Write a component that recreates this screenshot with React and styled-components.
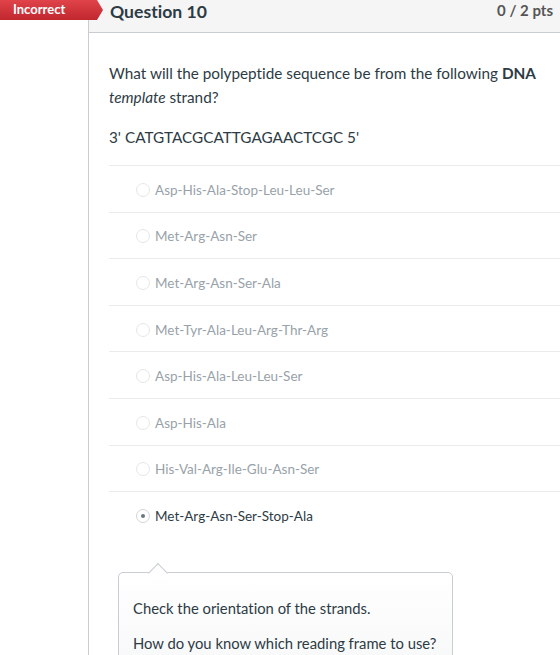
import React from "react";
import styled, { createGlobalStyle } from "styled-components";

const Global = createGlobalStyle`
  html, body { margin: 0; padding: 0; background: #fff; }
  body {
    font-family: Lato, "Open Sans", sans-serif;
    color: #2d3b45;
    font-variant-ligatures: none;
  }
`;

const Page = styled.div`
  display: flex;
  height: 655px;
  overflow: hidden;
`;

const Side = styled.div`
  position: relative;
  width: 88px;
  flex: none;
`;

const Badge = styled.div`
  position: absolute;
  top: 0;
  left: 0;
  z-index: 2;
  width: 103px;
  height: 20px;
  box-sizing: border-box;
  padding-left: 13px;
  background: linear-gradient(#e0434a, #c1272f);
  clip-path: polygon(0 0, 97px 0, 103px 10px, 97px 20px, 0 20px);
  color: #fff;
  font-weight: 700;
  font-size: 13px;
  line-height: 18px;
`;

const Panel = styled.div`
  flex: 1;
  border-left: 1px solid #c7cdd1;
  min-width: 0;
`;

const Header = styled.div`
  display: flex;
  justify-content: space-between;
  align-items: flex-start;
  height: 33px;
  box-sizing: border-box;
  padding: 1px 7px 0 21px;
  background: #f5f5f5;
  border-bottom: 1px solid #c7cdd1;
`;

const Title = styled.div`
  font-size: 17.6px;
  font-weight: 700;
  line-height: 22px;
  color: #2d3b45;
`;

const Pts = styled.div`
  font-size: 15px;
  font-weight: 700;
  line-height: 18px;
  color: #555;
`;

const Body = styled.div`
  padding: 28px 0 0 20px;
`;

const QText = styled.p`
  margin: 0 20px ${(p) => (p.$gap ? "16px" : "0")} 0;
  font-size: 15.3px;
  line-height: 24px;
  color: #2d3b45;
`;

const Answers = styled.div`
  margin-top: 16px;
`;

const Row = styled.div`
  display: flex;
  align-items: center;
  height: 43.6px;
  padding-top: 2px;
  border-top: 1px solid #e9ebec;
`;

const Radio = styled.span`
  position: relative;
  flex: none;
  width: 14px;
  height: 14px;
  box-sizing: border-box;
  margin-left: 27px;
  margin-right: 5px;
  border-radius: 50%;
  border: 1px solid ${(p) => (p.$checked ? "#d2d5d8" : "#e4e6e8")};
  background: #fff;
  &::after {
    content: "";
    display: ${(p) => (p.$checked ? "block" : "none")};
    position: absolute;
    left: 50%;
    top: 50%;
    width: 4px;
    height: 4px;
    margin: -2px 0 0 -2px;
    border-radius: 50%;
    background: #6b7780;
  }
`;

const Label = styled.span`
  font-size: 13.5px;
  line-height: 20px;
  color: ${(p) => (p.$checked ? "#2d3b45" : "#98a2a9")};
`;

const Tip = styled.div`
  position: relative;
  margin: 34px 0 0 9px;
  width: 335px;
  box-sizing: border-box;
  padding: 12px 14px 12px;
  border: 1px solid #c7cdd1;
  border-radius: 5px;
  background: linear-gradient(#ffffff, #f5f6f7 120px);
  &::before {
    content: "";
    position: absolute;
    top: -7px;
    left: 32px;
    width: 13px;
    height: 13px;
    background: #fff;
    border-top: 1px solid #c7cdd1;
    border-left: 1px solid #c7cdd1;
    transform: rotate(45deg);
  }
`;

const TipText = styled.p`
  margin: 11px 0;
  font-size: 14.8px;
  line-height: 24px;
  color: #2d3b45;
  white-space: nowrap;
`;

const answers = [
  "Asp-His-Ala-Stop-Leu-Leu-Ser",
  "Met-Arg-Asn-Ser",
  "Met-Arg-Asn-Ser-Ala",
  "Met-Tyr-Ala-Leu-Arg-Thr-Arg",
  "Asp-His-Ala-Leu-Leu-Ser",
  "Asp-His-Ala",
  "His-Val-Arg-Ile-Glu-Asn-Ser",
  "Met-Arg-Asn-Ser-Stop-Ala",
];

export default function App() {
  return (
    <>
      <Global />
      <Page>
        <Side>
          <Badge>Incorrect</Badge>
        </Side>
        <Panel>
          <Header>
            <Title>Question 10</Title>
            <Pts>0 / 2 pts</Pts>
          </Header>
          <Body>
            <QText $gap>
              What will the polypeptide sequence be from the following <b>DNA</b>{" "}
              <i>template</i> strand?
            </QText>
            <QText>3' CATGTACGCATTGAGAACTCGC 5'</QText>
            <Answers>
              {answers.map((a, i) => {
                const checked = i === answers.length - 1;
                return (
                  <Row key={a}>
                    <Radio $checked={checked} />
                    <Label $checked={checked}>{a}</Label>
                  </Row>
                );
              })}
            </Answers>
            <Tip>
              <TipText>Check the orientation of the strands.</TipText>
              <TipText>How do you know which reading frame to use?</TipText>
            </Tip>
          </Body>
        </Panel>
      </Page>
    </>
  );
}
